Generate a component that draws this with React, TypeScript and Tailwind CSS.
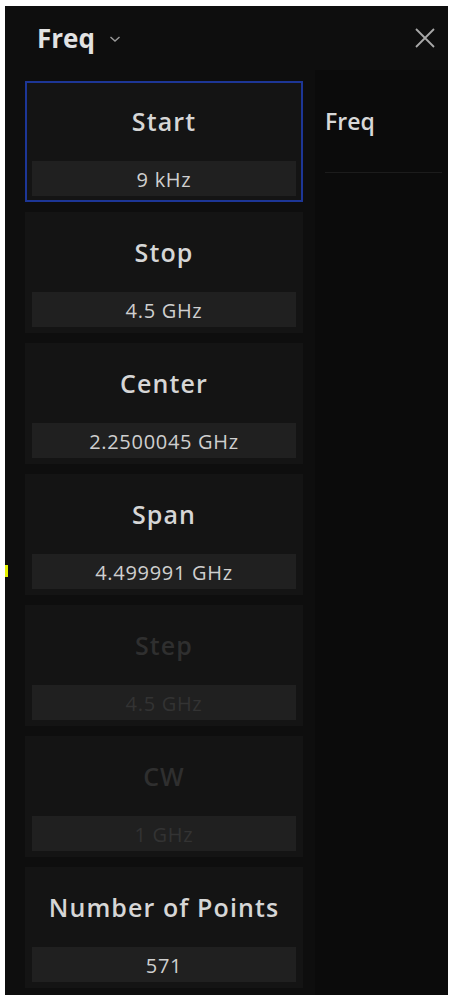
import React from "react";

type Item = { title: string; value: string; disabled?: boolean; active?: boolean };

const items: Item[] = [
  { title: "Start", value: "9 kHz", active: true },
  { title: "Stop", value: "4.5 GHz" },
  { title: "Center", value: "2.2500045 GHz" },
  { title: "Span", value: "4.499991 GHz" },
  { title: "Step", value: "4.5 GHz", disabled: true },
  { title: "CW", value: "1 GHz", disabled: true },
  { title: "Number of Points", value: "571" },
];

function Card({ item }: { item: Item }) {
  const border = item.active ? "border-[#1d3696]" : "border-transparent";
  const titleColor = item.disabled ? "text-[#2f2f2f]" : "text-[#d6d6d6]";
  const valueColor = item.disabled ? "text-[#333333]" : "text-[#cfcfcf]";
  return (
    <div className={`h-[121px] w-[278px] bg-[#141414] border-2 ${border} flex flex-col`}>
      <div className={`h-[78px] flex items-center justify-center text-[25px] font-semibold tracking-[1.1px] ${titleColor}`}>
        {item.title}
      </div>
      <div className={`mx-[5px] h-[35px] bg-[#202020] flex items-center justify-center pt-[2px] text-[20px] tracking-[0.7px] ${valueColor}`}>
        {item.value}
      </div>
    </div>
  );
}

export default function App() {
  return (
    <div className="w-[449px] h-[1000px] bg-white pt-[6px] pl-[5px] pr-[1px]" style={{ fontFamily: "'Open Sans', 'Noto Sans', sans-serif" }}>
      <div className="h-[989px] bg-[#0c0c0c] flex flex-col">
        <div className="h-[64px] flex items-center justify-between pl-[32px] pr-[12px] bg-[#0e0e0e]">
          <div className="flex items-center gap-[14px]">
            <span className="text-[26px] font-bold text-[#e2e2e2]">Freq</span>
            <svg width="12" height="8" viewBox="0 0 12 8" className="mt-[2px]">
              <path d="M1.5 2 L6 6 L10.5 2" stroke="#9a9a9a" strokeWidth="1.4" fill="none" />
            </svg>
          </div>
          <svg width="22" height="22" viewBox="0 0 22 22">
            <path d="M2 2 L20 20 M20 2 L2 20" stroke="#a8a8a8" strokeWidth="1.8" fill="none" />
          </svg>
        </div>
        <div className="flex flex-1 relative">
          <div className="w-[310px] flex flex-col gap-[10px] pl-[20px] pt-[11px] bg-[#0e0e0e]">
            {items.map((it) => (
              <Card key={it.title} item={it} />
            ))}
          </div>
          <div className="absolute left-0 top-[495px] w-[3px] h-[12px] bg-[#e3f000]" />
          <div className="flex-1 bg-[#0b0b0b] pl-[10px] pr-[6px]">
            <div className="h-[103px] flex items-center text-[23px] font-semibold text-[#d8d8d8] border-b border-[#1c1c1c]">
              Freq
            </div>
          </div>
        </div>
      </div>
    </div>
  );
}
